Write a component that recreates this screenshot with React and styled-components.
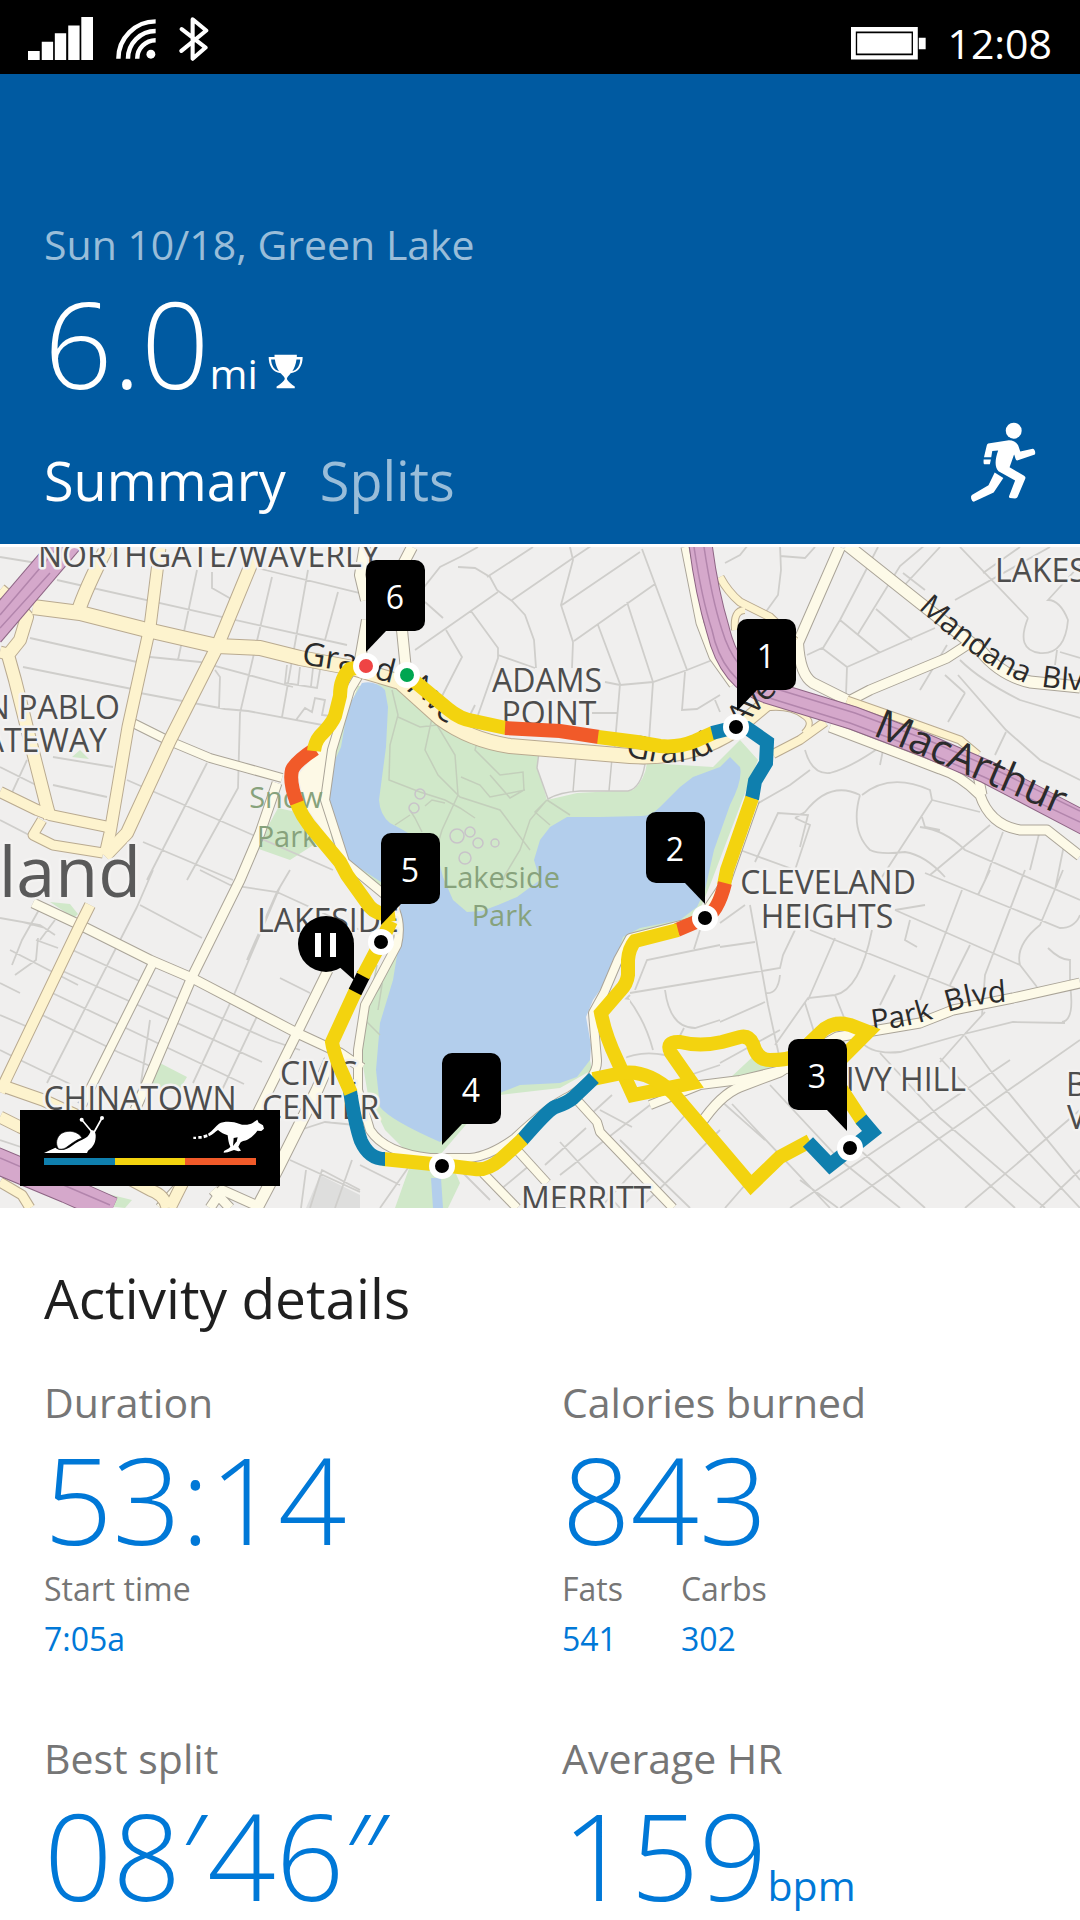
import React, { useState } from 'react'
import styled, { createGlobalStyle } from 'styled-components'

const GlobalStyle = createGlobalStyle`
  body {
    margin: 0;
    background: #fff;
    font-family: "Open Sans", "Noto Sans", sans-serif;
  }
`

const Screen = styled.div`
  display: flex;
  flex-direction: column;
  min-height: 100vh;
  overflow: hidden;
`

const StatusBar = styled.div`
  display: flex;
  justify-content: space-between;
  height: 74px;
  padding: 0 28px;
  box-sizing: border-box;
  background: #000;
  color: #fff;
`

const StatusGroup = styled.div`
  display: flex;
  align-items: center;
  gap: ${(p) => p.$gap}px;
  padding-top: ${(p) => p.$top}px;
`

const Clock = styled.time`
  font-size: 41px;
  line-height: 50px;
`

const Header = styled.header`
  display: flex;
  flex-direction: column;
  padding: 142px 43px 28px 44px;
  background: #005aa1;
  color: #fff;
`

const Place = styled.p`
  margin: 0;
  font-size: 41px;
  line-height: 56px;
  color: #99bdd9;
`

const Distance = styled.div`
  display: flex;
  align-items: baseline;
  margin-top: 7px;
`

const Figure = styled.span`
  font-size: 120px;
  line-height: 128px;
  font-weight: 300;
`

const Unit = styled.span`
  font-size: 41px;
  line-height: 56px;
`

const TrophyIcon = styled.svg`
  width: 35px;
  height: 35px;
  margin-left: 10px;
`

const TabRow = styled.div`
  display: flex;
  justify-content: space-between;
  align-items: flex-end;
  margin-top: 14px;
`

const Tabs = styled.div`
  display: flex;
  gap: 34px;
`

const Tab = styled.button`
  border: 0;
  padding: 0;
  background: none;
  font: inherit;
  font-size: 54px;
  line-height: 72px;
  color: ${(p) => (p.$active ? '#fff' : '#99bdd9')};
  cursor: pointer;
`

const RunnerIcon = styled.svg`
  width: 68px;
  height: 83px;
  margin-bottom: 12px;
`

const MapArea = styled.section`
  position: relative;
  height: 661px;
  border-top: 3px solid #fff;
  background: #f0efee;
  overflow: hidden;
`

const MapCanvas = styled.svg`
  display: block;
  width: 100%;
  height: 100%;
`

const Legend = styled.div`
  position: absolute;
  left: 20px;
  bottom: 22px;
  display: flex;
  flex-direction: column;
  width: 260px;
  height: 76px;
  padding: 5px 24px 0;
  box-sizing: border-box;
  background: #000;
`

const LegendIcons = styled.div`
  display: flex;
  justify-content: space-between;
  height: 43px;
  margin-right: -9px;
`

const LegendBar = styled.div`
  display: flex;
  height: 7px;
`

const LegendStep = styled.span`
  flex: 1;
  background: ${(p) => p.$color};
`

const Details = styled.main`
  padding: 54px 0 40px 44px;
`

const Title = styled.h2`
  margin: 0;
  font-size: 55px;
  line-height: 72px;
  font-weight: 400;
  color: #1f1f1f;
`

const Stats = styled.div`
  display: grid;
  grid-template-columns: 1fr 1fr;
  row-gap: 66px;
  margin-top: 40px;
`

const StatName = styled.h3`
  margin: 0;
  font-size: 41px;
  line-height: 56px;
  font-weight: 400;
  color: #767676;
`

const StatValue = styled.div`
  display: flex;
  align-items: baseline;
  margin: 5px 0 1px;
  color: #0078d7;
`

const Extras = styled.dl`
  display: flex;
  gap: 58px;
  margin: 0;
  font-size: 32px;
  line-height: 50px;
  color: #767676;

  & dd {
    margin: 0;
    color: #0078d7;
  }
`

const PACE = { slow: '#0f7fae', mid: '#f3d30f', fast: '#f15a29', pause: '#000' }

const MINOR = `
M0 557L37 563 M57 580L347 645 M212 572V588L233 600 M197 570L178 660
M272 577L240 713L238 788L187 880 M308 570L282 717 M257 568L360 593L366 594
M338 592L325 640 M30 638L137 662 M23 667L137 690 M150 657L200 662L293 687
M140 693L225 709L248 711L333 727 M215 670L220 677L219 708 M53 785L107 797
M53 757L113 767 M207 763L147 880 M127 780L333 870 M143 842L233 880
M0 767L40 787 M0 820L33 837 M27 760L10 797 M287 665L285 683L317 688L320 670
M300 667L298 685M313 668L311 686 M296 720L305 708L312 712L315 698L325 700L322 715L330 716
M137 907L47 1083 M280 887L233 997L193 1083 M200 870L230 885L277 892L360 930
M140 905L202 938 M153 870L137 907 M290 870L277 892L247 960 M280 978L310 993
M66 947L148 985L270 1040L300 1050 M56 968L140 1006L262 1062
M46 990L130 1030L244 1084 M36 1012L118 1052L150 1066 M20 1060L70 1084
M0 983L20 993 M0 1015L28 1027 M0 1050L16 1058 M0 918L40 925L55 935M40 908L22 940L12 965
M38 938L36 960L15 975 M36 940L58 948 M22 922L45 928 M55 920L40 940 M260 1010L222 1090
M10 950L78 985 M150 1020L140 1090 M290 1160L360 1192 M310 1208L322 1170L360 1190
M300 1130L325 1122L355 1125 M335 1208L352 1160 M306 1170L301 1208 M0 1140L30 1150
M406 610L440 567L460 557L478 547 M425 602L443 618 M458 567L475 568L490 577L497 590L512 601L525 615L534 640L536 668
M487 577L533 547 M512 600L573 558L600 540 M570 547L573 560L561 605L573 642L572 668
M562 605L640 552 M642 549L687 670L653 682L620 685L605 682 M574 641L655 584
M598 625L620 684L614 755 M627 602L653 682L648 755 M685 672L682 710L697 709L720 695
M687 670L725 655 M415 650L498 592 M446 630L462 657L440 700 M471 611L498 648V658L478 715
M498 655L535 668 M470 715L475 705 M715 700L720 712 M592 713H618
M725 563L740 555L748 545 M780 545L781 570L778 595L765 613 M780 556L805 558L815 547
M807 655L822 648L847 667L846 695 M823 648L840 620L878 547 M847 667L935 628
M840 620L880 653M876 609L912 640 M858 634L900 566L925 545 M903 573L925 590
M960 547L1028 618 M983 573L1020 547 M900 590L940 547 M955 600L1050 547
M1028 618Q1015 650 1040 653Q1065 655 1068 620Q1060 600 1048 600L1080 565
M1057 650L1055 665 M1060 652L1080 658 M947 645L920 690 M945 675L965 693
M960 660Q980 680 1020 700L1080 718 M958 675L1006 730L1040 760L1080 780
M965 693L948 722 M1006 732L995 755 M885 740L880 765 M805 750Q812 775 830 773Q850 768 880 747
M755 805L790 785L810 770 M860 795Q830 780 805 812L795 818 M800 847L808 815L778 813L755 862
M795 818L810 825L795 870 M860 795Q850 830 870 850Q880 855 905 852Q925 855 945 877
M862 795Q890 772 930 790L932 800L880 880 M932 800L980 812 M740 850L795 870
M922 817L925 827L940 830 M920 827Q945 830 965 850L1080 900 M990 825L930 875
M1003 832L985 880M1040 830L1030 870 M1065 840L1055 890 M925 873L1060 928Q1075 928 1080 915
M895 910L1020 965L1037 987 M962 890L920 1000 M990 870L978 895 M1025 870L985 975L982 1015
M1063 870L1040 925Q1015 945 1020 965 M895 975L880 1005 M970 945L950 985
M810 930L955 988 M835 938L808 1000 M872 930Q860 990 835 995L808 998L775 1045 M835 995L845 1020
M910 920L905 940L917 947 M1048 948Q1060 960 1070 960V985Q1075 1020 1062 1022 M925 905L895 910
M750 905L768 1005L780 1060 M720 947L755 942 M720 978L780 968L783 955L795 930 M720 923L745 905
M765 993Q778 995 780 975 M720 1022L765 1002 M720 1063L780 1030 M805 1003L815 1035
M860 1040Q870 1055 900 1052L960 1035L1013 1022L1065 1023 M963 1036L985 1012 M963 1036L940 1062
M965 1036L990 1070L1080 1180 M880 1053L940 1118L1045 1208 M880 1085L1015 1208 M940 1058L1080 1208
M1080 1040L840 1208 M1080 1110L965 1208 M1080 1170L1040 1208 M1010 1060L790 1208 M720 1100L765 1140
M770 1085L840 1160L900 1208 M732 1104L830 1208 M800 1180L838 1208 M860 1150L925 1208
M690 1110L600 1208 M720 1130L640 1208 M650 1105L560 1175 M745 1185L725 1208 M620 1140L690 1208
M560 1142L620 1208 M530 1165L500 1190 M590 1115L612 1095M600 1110L632 1127 M586 1128L545 1165
M635 990L647 960L720 945 M630 993L720 978 M665 990Q670 1028 695 1028L720 1020 M610 1015L630 995
M627 997Q645 1020 653 1050 M620 1060Q640 1050 665 1055 M694 949L700 930 M684 1028L675 1045
M360 1165L400 1185 M380 1208L410 1165 M460 1170L490 1200 M500 1110Q535 1085 545 1110 M690 1075L720 1065
`

const CREAM = [
  ['M133 723L167 740L210 758L282 778', 7],
  ['M277 783L260 833L240 880L192 977L147 1083L135 1110', 8],
  ['M33 903L80 925L150 960L192 978L297 1033L340 1053L362 1068', 8],
  ['M152 965L93 1083L82 1105', 7],
  ['M328 970L297 1033L250 1128', 8],
  ['M330 1060L317 1090L277 1170L257 1208', 10],
  ['M213 1190L230 1208 M160 1208L185 1180 M210 1208L222 1190L262 1208', 8],
  ['M840 547L798 643Q800 675 813 683L847 700', 9],
  ['M847 545L920 603L980 650Q1000 675 1030 682L1080 687', 10],
  ['M847 702L870 690L947 658L967 645', 8],
  ['M830 727L940 769Q960 775 980 795Q990 825 1020 830H1047L1080 856', 8],
  ['M978 775L982 795', 8],
  ['M685 547L700 623L713 657L733 685', 6],
  ['M1080 983L1013 998L953 1010L920 1023L837 1037L810 1052L780 1072L740 1087Q720 1095 700 1125', 8],
  ['M650 1105L700 1085L740 1080L790 1068', 7],
  ['M577 1100L597 1122L600 1132L673 1208', 7],
  ['M517 1150L547 1183', 7],
  ['M483 1173L517 1208', 7],
  ['M365 545L360 575L366 600 M412 547L400 570L385 600L402 630L406 670 M367 620L360 660', 9],
  ['M755 800L727 880L700 920L630 938L618 960L604 993L593 1013L597 1060Q598 1078 570 1096Q550 1105 515 1138Q490 1156 470 1158H430Q385 1153 370 1130L358 1090V1050L365 1005L397 945Q404 915 385 895L345 862L325 800L332 750L350 690L362 670', 7]
]

const YELLOW = [
  ['M107 547Q85 590 78 612', 12],
  ['M160 547L150 627L128 727L110 833L105 855', 10],
  ['M257 550L217 647L170 740L127 833L105 856', 11],
  ['M90 905L80 925L0 1092', 9],
  ['M0 590L12 600L27 617L20 640L8 655L15 680L30 740L47 807L50 818', 11],
  ['M0 652L12 655', 10],
  ['M0 792L37 810L50 815L113 828', 9],
  ['M42 820L33 835L53 845L103 853', 8],
  ['M33 607L80 613L143 629L217 646L260 648L300 658L353 668L400 682L440 718Q470 740 510 746L630 756Q690 760 735 730L785 688', 13],
  ['M0 1085L43 1100L80 1117', 10],
  ['M0 1117L20 1127L90 1158L150 1190Q165 1195 167 1208 M170 1208L184 1180', 10],
  ['M0 1182L22 1195L30 1208', 8],
  ['M720 577Q728 592 740 602L770 617L795 641', 6],
  ['M735 630Q733 610 745 610', 5],
  ['M773 754L800 740L825 722', 7],
  ['M765 708Q790 705 803 715Q815 722 804 733', 4],
  ['M847 700L907 721L960 740L978 755', 6]
]

const HIGHWAY = [
  ['M-10 633L72 537', 26],
  ['M700 540Q706 590 718 630Q730 680 768 692L853 718L927 746L987 772L1090 826', 21],
  ['M-5 1160L67 1190L112 1210', 24]
]

const ROUTE = [
  ['mid', 'M407 675L448 709Q460 719 473 721L506 728'],
  ['fast', 'M505 728L560 731L599 737'],
  ['mid', 'M598 737L637 742L660 746Q678 748 695 741L713 733'],
  ['slow', 'M712 733L736 727L747 728L767 742L766 763L755 781L752 799'],
  ['mid', 'M752 798L727 870L724 885'],
  ['fast', 'M725 883Q718 912 705 918L677 930'],
  ['mid', 'M678 930L635 941Q629 948 628 960V975Q627 984 620 991L601 1013Q605 1035 617 1060L633 1095L692 1083L671 1053Q665 1041 680 1042Q700 1047 722 1042L740 1037Q749 1035 753 1044Q757 1060 770 1060Q790 1060 797 1055L820 1033Q832 1020 850 1025L868 1032L830 1070L840 1087L863 1122'],
  ['mid', 'M810 1141L780 1157L751 1185L673 1093Q645 1067 617 1074L593 1079'],
  ['slow', 'M861 1119L872 1132L830 1165L808 1142'],
  ['slow', 'M594 1078L573 1098Q567 1103 555 1107Q548 1110 522 1140'],
  ['mid', 'M523 1139L500 1160Q487 1171 475 1169L442 1165L383 1159'],
  ['slow', 'M385 1159Q369 1159 361 1141Q356 1128 350 1091'],
  ['mid', 'M351 1093L340 1068Q333 1050 332 1042L356 990'],
  ['pause', 'M355 992L364 974'],
  ['mid', 'M363 976L381 942L391 921'],
  ['mid', 'M395 914Q378 916 370 907L347 875L340 862L315 832Q300 815 296 800'],
  ['fast', 'M297 803Q289 782 292 770Q295 762 315 749'],
  ['mid', 'M314 751Q315 742 320 736Q332 724 335 716L340 696Q340 678 350 669L366 666']
]

// x, y is where the tail of the flag points
const MILES = [
  { n: 1, x: 737, y: 711, cx: 736, cy: 727 },
  { n: 2, x: 705, y: 904, cx: 705, cy: 918, left: true },
  { n: 3, x: 847, y: 1131, cx: 850, cy: 1148, left: true },
  { n: 4, x: 442, y: 1145, cx: 442, cy: 1166 },
  { n: 5, x: 381, y: 925, cx: 381, cy: 942 },
  { n: 6, x: 366, y: 652, cx: 366, cy: 666, dot: '#ef4444' }
]

const PLACES = [
  ['NORTHGATE/WAVERLY', 38, 567],
  ['SAN PABLO', 120, 719, 'end'],
  ['GATEWAY', 107, 752, 'end'],
  ['LAKESIDE', 257, 932],
  ['CIVIC', 280, 1085],
  ['CENTER', 262, 1119],
  ['CHINATOWN', 140, 1110, 'middle'],
  ['ADAMS', 547, 692, 'middle'],
  ['POINT', 549, 725, 'middle'],
  ['CLEVELAND', 828, 894, 'middle'],
  ['HEIGHTS', 827, 928, 'middle'],
  ['LAKESHORE', 995, 582],
  ['IVY HILL', 966, 1091, 'end'],
  ['MERRITT', 586, 1210, 'middle'],
  ['BELLA', 1066, 1096],
  ['VISTA', 1067, 1129]
]

const PARKS = [
  ['Snow', 286, 808],
  ['Park', 287, 847],
  ['Lakeside', 501, 888],
  ['Park', 502, 926]
]

const PlaceLabel = styled.text`
  font-size: ${(p) => p.$size || 32}px;
  fill: ${(p) => p.$color || '#4d4d4d'};
  stroke: ${(p) => p.$halo || '#f3f2f1'};
  stroke-width: 5px;
  stroke-linejoin: round;
  paint-order: stroke;
`

const StreetLabel = styled.text`
  font-size: ${(p) => p.$size}px;
  fill: #2b2b2b;
`

const FlagNumber = styled.text`
  font-size: 32px;
  fill: #fff;
  text-anchor: middle;
`

function Roads ({ list, edge, fill }) {
  return (
    <g fill='none' strokeLinejoin='round'>
      {list.map(([d, w]) => <path key={d} d={d} stroke={edge} strokeWidth={w + 3} />)}
      {list.map(([d, w]) => <path key={d} d={d} stroke={fill} strokeWidth={w + 1} />)}
    </g>
  )
}

function Flag ({ n, x, y, left }) {
  const boxX = left ? x - 59 : x
  const dir = left ? -1 : 1
  return (
    <g>
      <rect x={boxX} y={y - 92} width='59' height='71' rx='10' />
      <path d={`M${x} ${y - 40}V${y}L${x + 20 * dir} ${y - 21}V${y - 40}Z`} />
      <FlagNumber x={boxX + 29} y={y - 43}>{n}</FlagNumber>
    </g>
  )
}

function Dot ({ cx, cy, color }) {
  return <circle cx={cx} cy={cy} r='10' fill={color || '#000'} stroke='#fff' strokeWidth='6' />
}

function RouteMap () {
  return (
    <MapCanvas viewBox='0 547 1080 661' preserveAspectRatio='xMidYMid slice' role='img' aria-label='Route map'>
      <path fill='#d0e8c9' d='M278 808L310 815L318 842L290 860L256 848Z M158 1062L187 1077L178 1092L150 1090Z M50 902L70 904L78 914L74 918Z M92 1190L132 1200L125 1208L90 1204Z M72 757L80 750L89 759Z M730 1078L760 1050L780 1065L760 1075Z' />
      <path fill='#dededd' d='M320 1175L360 1195V1208H306Z' />
      <path d={MINOR} fill='none' stroke='#cfcecb' strokeWidth='1.8' />
      <path fill='#fdf9e6' d='M362 670L345 685L338 720L315 755L298 775L305 805L345 862L328 800L332 750L360 690Z' />
      <path
        fill='#d0e8c9'
        d='M380 684L417 690L447 722L477 742L540 752L538 767L547 800L577 793L633 790Q645 780 647 763L713 767L740 740L758 760L750 780L712 880L697 917L620 945L590 1000L583 1025L592 1070L560 1088L500 1095L470 1120L440 1155L405 1150L385 1130L368 1095L362 1060V1010L396 942L400 910L370 880L335 855L324 800L336 745L358 686Z'
      />
      <path fill='#f0efee' d='M600 996L590 1050L592 1075L625 1075L630 1000Z M470 1120Q500 1095 535 1093L560 1096L515 1138L480 1155L448 1156Z' />
      <path fill='#d0e8c9' d='M412 1160L395 1208H448L460 1183L450 1160Z' />
      <path
        fill='#b3ceec'
        d='M362 683L348 707L341 747L328 775V800L333 840L343 857L393 890Q404 910 400 937L393 980L380 1023L376 1070L380 1107Q390 1120 440 1142L480 1108L502 1092L520 1085L560 1083L577 1077L590 1060L591 1045L586 1017L593 1000L607 980L617 957L623 937L640 928L680 920L697 907L705 890L714 850L730 805Q743 780 740 767L730 757L720 767L693 777L680 787L660 807Q650 817 640 816L600 817H567L550 827L540 840L534 860L540 880L517 897L498 905L482 911L467 912L453 900L443 877L436 850L403 830L390 823Q380 815 379 800L386 747L388 707L385 690Q375 680 362 683Z M431 1178L433 1208H443L441 1178Z'
      />
      <path
        fill='none'
        stroke='#c3cfbb'
        strokeWidth='1.5'
        d='M392 690L398 715L390 745L389 780L420 792L445 800L460 808L475 818 M398 717L420 727L437 725L455 755L458 795L442 830L436 850 M432 718L425 750L438 775L460 797L500 810L530 850 M477 742L475 750L500 775L523 772L524 790L510 798L490 775 M545 802L530 820L520 850L505 875L500 890 M547 800L570 815 M547 800L535 812L550 825 M461 777L480 785L490 797L525 790 M425 806L432 800L445 803M410 810L415 818L422 832M395 825L410 815 M377 965L370 1000L382 985L378 1010 M365 1020L380 1035'
      />
      <g fill='none' stroke='#c8c3c9' strokeWidth='1.5'>
        <circle cx='420' cy='794' r='5' />
        <circle cx='414' cy='808' r='5' />
        <circle cx='457' cy='836' r='7' />
        <circle cx='470' cy='832' r='5' />
        <circle cx='478' cy='843' r='5' />
        <circle cx='465' cy='858' r='6' />
        <circle cx='495' cy='843' r='4' />
      </g>
      {/* blocks between Grand Ave and the lake */}
      <path fill='#f0efee' stroke='#c9c8c4' strokeWidth='1.5' d='M539 752L537 768L548 799Q560 792 580 791H628Q641 788 645 764Z M576 755L573 792 M612 758L609 791' />
      <Roads list={CREAM} edge='#aaa498' fill='#fdfae8' />
      <Roads list={YELLOW} edge='#b9aa90' fill='#fdf3ce' />
      <Roads list={HIGHWAY} edge='#8d6484' fill='#d5a8cb' />
      <path
        fill='none'
        stroke='#b285ac'
        strokeWidth='1.5'
        d='M0 615L58 547 M0 628L50 573 M694 547Q702 600 712 630Q722 680 766 697L850 723L924 751L984 777L1080 822 M704 547Q712 600 722 630Q735 674 770 687L855 713L930 741L990 767L1080 811 M0 1158L110 1205'
      />

      <defs>
        <path id='grandWest' d='M301 664L345 671L392 683L420 698L440 719L470 740' />
        <path id='grandEast' d='M625 756L660 763L695 761L725 745L775 693L800 670' />
        <path id='mandana' d='M918 608Q975 662 1025 683Q1060 692 1110 690' />
        <path id='macArthur' d='M872 735L960 772L1060 815L1150 860' />
        <path id='parkBlvd' d='M872 1031Q925 1025 955 1010Q990 1000 1030 1002' />
      </defs>
      {PARKS.map(([name, x, y]) => (
        <PlaceLabel key={name + y} x={x} y={y} textAnchor='middle' $size={29} $color='#87a27c' $halo='none'>{name}</PlaceLabel>
      ))}
      {PLACES.map(([name, x, y, anchor]) => (
        <PlaceLabel key={name} x={x} y={y} textAnchor={anchor}>{name}</PlaceLabel>
      ))}
      <PlaceLabel x='141' y='897' textAnchor='end' $size={70} $color='#5a5a5a'>Oakland</PlaceLabel>
      <StreetLabel $size={32}><textPath href='#grandWest'>{'Grand\u00a0\u00a0Ave'}</textPath></StreetLabel>
      <StreetLabel $size={32}><textPath href='#grandEast'>{'Grand\u00a0\u00a0\u00a0\u00a0Ave'}</textPath></StreetLabel>
      <StreetLabel $size={30}><textPath href='#mandana'>{'Mandana\u00a0\u00a0Blvd'}</textPath></StreetLabel>
      <StreetLabel $size={41}><textPath href='#macArthur'>{'MacArthur\u00a0\u00a0Blvd'}</textPath></StreetLabel>
      <StreetLabel $size={30}><textPath href='#parkBlvd'>{'Park\u00a0\u00a0Blvd'}</textPath></StreetLabel>

      <g fill='none' strokeWidth='14' strokeMiterlimit='10'>
        {ROUTE.map(([pace, d]) => <path key={d} d={d} stroke={PACE[pace]} />)}
      </g>
      {MILES.map((m) => <Flag key={m.n} {...m} />)}
      <circle cx='326' cy='944' r='28' />
      <path d='M354 944V980L336 964Z' />
      <path fill='#fff' d='M315 933H321V957H315ZM330 933H336V957H330Z' />
      <Dot cx={407} cy={675} color='#00a651' />
      {MILES.map((m) => <Dot key={m.n} cx={m.cx} cy={m.cy} color={m.dot} />)}
    </MapCanvas>
  )
}

function PaceLegend () {
  return (
    <Legend>
      <LegendIcons>
        <svg width='61' height='39' viewBox='102 43 183 117' fill='#fff' aria-label='Slow'>
          <path d='M102 157L136 141C150 153 170 148 186 135C200 124 215 119 225 113C236 107 240 98 242 90C250 86 256 92 257 103C258 122 252 138 234 150L231 157Z' />
          <path d='M145 144C136 130 138 110 155 98C175 86 205 92 216 112C195 119 180 133 168 141C160 146 150 147 145 144Z' stroke='#000' strokeWidth='2' />
          <path d='M216 58L246 94M276 52L251 97' stroke='#fff' strokeWidth='5' />
          <circle cx='215' cy='57' r='6' />
          <circle cx='276' cy='52' r='6' />
        </svg>
        <svg width='72' height='39' viewBox='552 43 216 117' fill='#fff' aria-label='Fast'>
          <path d='M553 108H561V115H553ZM568 106H578V114H568ZM583 104L594 101L596 109L585 113Z' />
          <path d='M597 99C610 92 620 76 630 69C645 60 675 62 690 69C705 75 720 73 732 66L745 57L749 66L762 74L765 84L757 91L745 90C738 100 730 108 722 113C710 122 700 120 694 126L688 138L696 150L688 152L675 148L656 155L644 156L645 151L660 143L664 138C658 125 658 118 656 104C645 100 636 96 627 88C620 92 612 102 600 107Z' />
          <path d='M674 112L686 110L683 122L672 136Z' fill='#000' />
        </svg>
      </LegendIcons>
      <LegendBar>
        <LegendStep $color={PACE.slow} />
        <LegendStep $color={PACE.mid} />
        <LegendStep $color={PACE.fast} />
      </LegendBar>
    </Legend>
  )
}

const stats = [
  { name: 'Duration', value: '53:14', extras: [['Start time', '7:05a']] },
  { name: 'Calories burned', value: '843', extras: [['Fats', '541'], ['Carbs', '302']] },
  { name: 'Best split', value: '08′46″' },
  { name: 'Average HR', value: '159', unit: 'bpm' }
]

function App () {
  const [tab, setTab] = useState('Summary')
  return (
    <Screen>
      <GlobalStyle />
      <StatusBar>
        <StatusGroup $gap={23} $top={3}>
          <svg width='65' height='43' viewBox='81 46 189 125' fill='#fff' aria-label='Signal'>
            <path d='M81 145H115V171H81ZM121 118H154V171H121ZM159 93H192V171H159ZM198 71H231V171H198ZM236 46H270V171H236Z' />
          </svg>
          <svg width='40' height='40' viewBox='336 55 117 117' fill='none' stroke='#fff' strokeWidth='13' aria-label='Wi-Fi'>
            <path d='M343 171A109 109 0 0 1 452 62M371 171A81 81 0 0 1 452 90M398 171A54 54 0 0 1 452 117' />
            <circle cx='438' cy='158' r='13' fill='#fff' stroke='none' />
          </svg>
          <svg width='30' height='44' viewBox='522 49 88 128' fill='none' stroke='#fff' strokeWidth='12' strokeLinecap='round' strokeLinejoin='round' aria-label='Bluetooth'>
            <path d='M530 84L600 138L562 171V55L602 88L529 148' />
          </svg>
        </StatusGroup>
        <StatusGroup $gap={21} $top={12}>
          <svg width='75' height='33' viewBox='903 79 219 96' fill='#fff' aria-label='Battery'>
            <path fillRule='evenodd' d='M903 79H1098V174H903ZM917 92V161H1084V92Z' />
            <path d='M921 97H1080V156H921ZM1101 110H1121V144H1101Z' />
          </svg>
          <Clock>12:08</Clock>
        </StatusGroup>
      </StatusBar>

      <Header>
        <Place>Sun 10/18, Green Lake</Place>
        <Distance>
          <Figure>6.0</Figure>
          <Unit>mi</Unit>
          <TrophyIcon viewBox='780 1032 102 102' fill='#fff' aria-label='Personal best'>
            <path
              fillRule='evenodd'
              d='M799 1034H864V1041H881C881 1065 870 1086 846 1088C842 1094 836 1098 835 1104C838 1114 850 1120 858 1127V1132H805V1127C814 1120 826 1114 829 1104C828 1098 822 1094 817 1088C793 1086 782 1065 782 1041H799ZM789 1048C790 1066 798 1078 812 1082C806 1074 802 1062 800 1048ZM874 1048H863C861 1062 857 1074 851 1082C865 1078 873 1066 874 1048Z'
            />
          </TrophyIcon>
        </Distance>
        <TabRow>
          <Tabs role='tablist'>
            {['Summary', 'Splits'].map((name) => (
              <Tab
                key={name}
                role='tab'
                aria-selected={tab === name}
                $active={tab === name}
                onClick={() => setTab(name)}
              >{name}
              </Tab>
            ))}
          </Tabs>
          <RunnerIcon viewBox='1245 1225 196 240' fill='#fff' aria-label='Run'>
            <circle cx='1374' cy='1253' r='23' />
            <path d='M1300 1290L1360 1281C1372 1281 1382 1287 1387 1296L1393 1313L1429 1305C1435 1304 1438 1318 1435 1322L1384 1339C1378 1338 1379 1330 1375 1322L1362 1359L1404 1383C1408 1386 1409 1389 1407 1393L1385 1445Q1383 1449 1378 1449L1363 1448Q1359 1446 1361 1441L1378 1397L1330 1370C1318 1358 1320 1335 1329 1310L1312 1312L1309 1330H1288L1296 1296Q1297 1291 1300 1290Z' />
            <path d='M1287 1336H1308L1305 1350H1289Q1286 1349 1287 1336ZM1319 1374L1344 1390L1316 1432L1260 1458Q1254 1460 1251 1450Q1249 1442 1253 1439L1301 1411Z' />
          </RunnerIcon>
        </TabRow>
      </Header>

      <MapArea>
        <RouteMap />
        <PaceLegend />
      </MapArea>

      <Details>
        <Title>Activity details</Title>
        <Stats>
          {stats.map((stat) => (
            <section key={stat.name}>
              <StatName>{stat.name}</StatName>
              <StatValue>
                <Figure>{stat.value}</Figure>
                {stat.unit && <Unit>{stat.unit}</Unit>}
              </StatValue>
              {stat.extras && (
                <Extras>
                  {stat.extras.map(([label, value]) => (
                    <div key={label}>
                      <dt>{label}</dt>
                      <dd>{value}</dd>
                    </div>
                  ))}
                </Extras>
              )}
            </section>
          ))}
        </Stats>
      </Details>
    </Screen>
  )
}

export default App
